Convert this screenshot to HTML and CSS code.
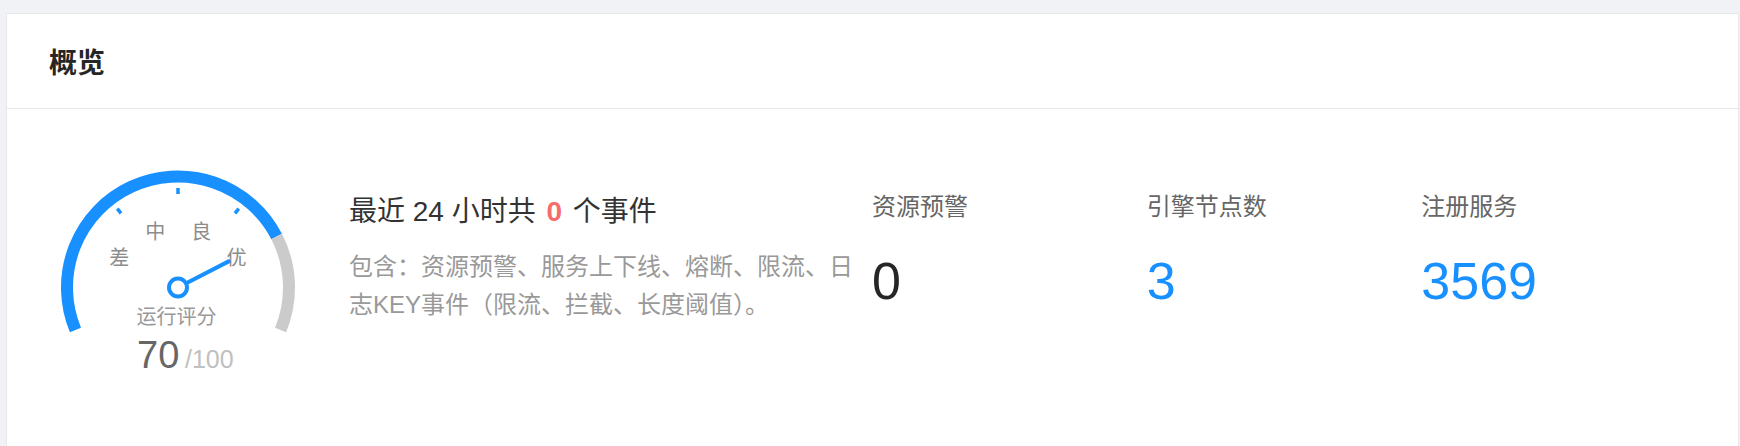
FILE: index.html
```html
<!DOCTYPE html>
<html>
<head>
    <meta charset="UTF-8">
    <title>概览</title>
    <link rel="stylesheet" href="styles.css">
</head>
<body>
<div class="page">
    <div class="card">
        <div class="card-head">
            <span class="card-title">概览</span>
        </div>
        <div class="card-body">
            <!-- 运行评分仪表盘 -->
            <div class="gauge">
                <svg width="260" height="240" viewBox="0 0 260 240">
                    <path class="arc arc-on" d="M26.45 178.98 A111 111 0 0 1 227.64 85.59"/>
                    <path class="arc arc-off" d="M227.64 85.59 A111 111 0 0 1 231.55 178.98"/>
                    <line class="tick" x1="71.96" y1="62.42" x2="68.29" y2="57.67"/>
                    <line class="tick" x1="129" y1="43" x2="129" y2="37"/>
                    <line class="tick" x1="186.04" y1="62.42" x2="189.71" y2="57.67"/>
                    <text class="level" x="70.2" y="106.5">差</text>
                    <text class="level" x="106.3" y="80.7">中</text>
                    <text class="level" x="152.3" y="80.7">良</text>
                    <text class="level" x="187.5" y="107.3">优</text>
                    <line class="needle" x1="129" y1="136.5" x2="179.65" y2="110.35"/>
                    <circle class="pivot" cx="129" cy="136.5" r="9"/>
                    <text class="gauge-name" x="127.5" y="166">运行评分</text>
                    <text class="gauge-score" x="88" y="217.3">70</text>
                    <text class="gauge-max" x="136" y="217.3">/100</text>
                </svg>
            </div>
            <div class="event">
                <p class="event-title">最近 24 小时共 <span class="event-count">0</span> 个事件</p>
                <p class="event-desc">包含：资源预警、服务上下线、熔断、限流、日志KEY事件（限流、拦截、长度阈值）。</p>
            </div>
            <div class="stat">
                <p class="stat-label">资源预警</p>
                <p class="stat-value">0</p>
            </div>
            <div class="stat">
                <p class="stat-label">引擎节点数</p>
                <p class="stat-value stat-blue">3</p>
            </div>
            <div class="stat">
                <p class="stat-label">注册服务</p>
                <p class="stat-value stat-blue">3569</p>
            </div>
        </div>
    </div>
</div>
</body>
</html>
```

FILE: styles.css
```css
* {
    margin: 0;
    padding: 0;
    box-sizing: border-box;
    font-family: "Liberation Sans", "Noto Sans CJK SC", sans-serif;
}

html, body {
    width: 100%;
    height: 100%;
    background: #f0f2f5;
}

.page {
    padding: 13px 1px 0 6px;
}

.card {
    background: #fff;
    border: 1px solid #e8e8e8;
}

.card-head {
    display: flex;
    align-items: center;
    height: 95px;
    padding: 0 42px;
    border-bottom: 1px solid #e8e8e8;
}

.card-title {
    font-size: 28px;
    font-weight: bold;
    color: #262626;
}

.card-body {
    display: flex;
    align-items: flex-start;
    padding: 42px 42px 60px;
}

/* 仪表盘 */
.gauge {
    flex: 0 0 300px;
}

.gauge svg {
    display: block;
}

.arc {
    fill: none;
    stroke-width: 12;
}

.arc-on {
    stroke: #1890ff;
}

.arc-off {
    stroke: #cbcbcb;
}

.tick {
    stroke: #1890ff;
    stroke-width: 3.5;
}

.needle {
    stroke: #1890ff;
    stroke-width: 4;
    stroke-linecap: round;
}

.pivot {
    fill: #fff;
    stroke: #1890ff;
    stroke-width: 4;
}

.level, .gauge-name {
    font-size: 20px;
    text-anchor: middle;
    dominant-baseline: central;
}

.level {
    fill: #8c8c8c;
}

.gauge-name {
    fill: #999;
}

.gauge-score {
    font-size: 38px;
    fill: #666;
}

.gauge-max {
    font-size: 25px;
    fill: #c0c0c0;
}

/* 事件 */
.event {
    flex: 0 0 523px;
    padding-top: 40px;
}

.event-title {
    font-size: 28px;
    line-height: 42px;
    color: #333;
}

.event-count {
    margin: 0 3px;
    font-weight: bold;
    color: #f56c6c;
}

.event-desc {
    margin-top: 15px;
    font-size: 24px;
    line-height: 38px;
    color: #999;
}

/* 统计 */
.stat {
    flex: 1;
    padding-top: 38px;
}

.stat-label {
    font-size: 24px;
    line-height: 36px;
    color: #666;
}

.stat-value {
    margin-top: 26px;
    font-size: 52px;
    line-height: 60px;
    color: #262626;
}

.stat-blue {
    color: #1890ff;
}
```
